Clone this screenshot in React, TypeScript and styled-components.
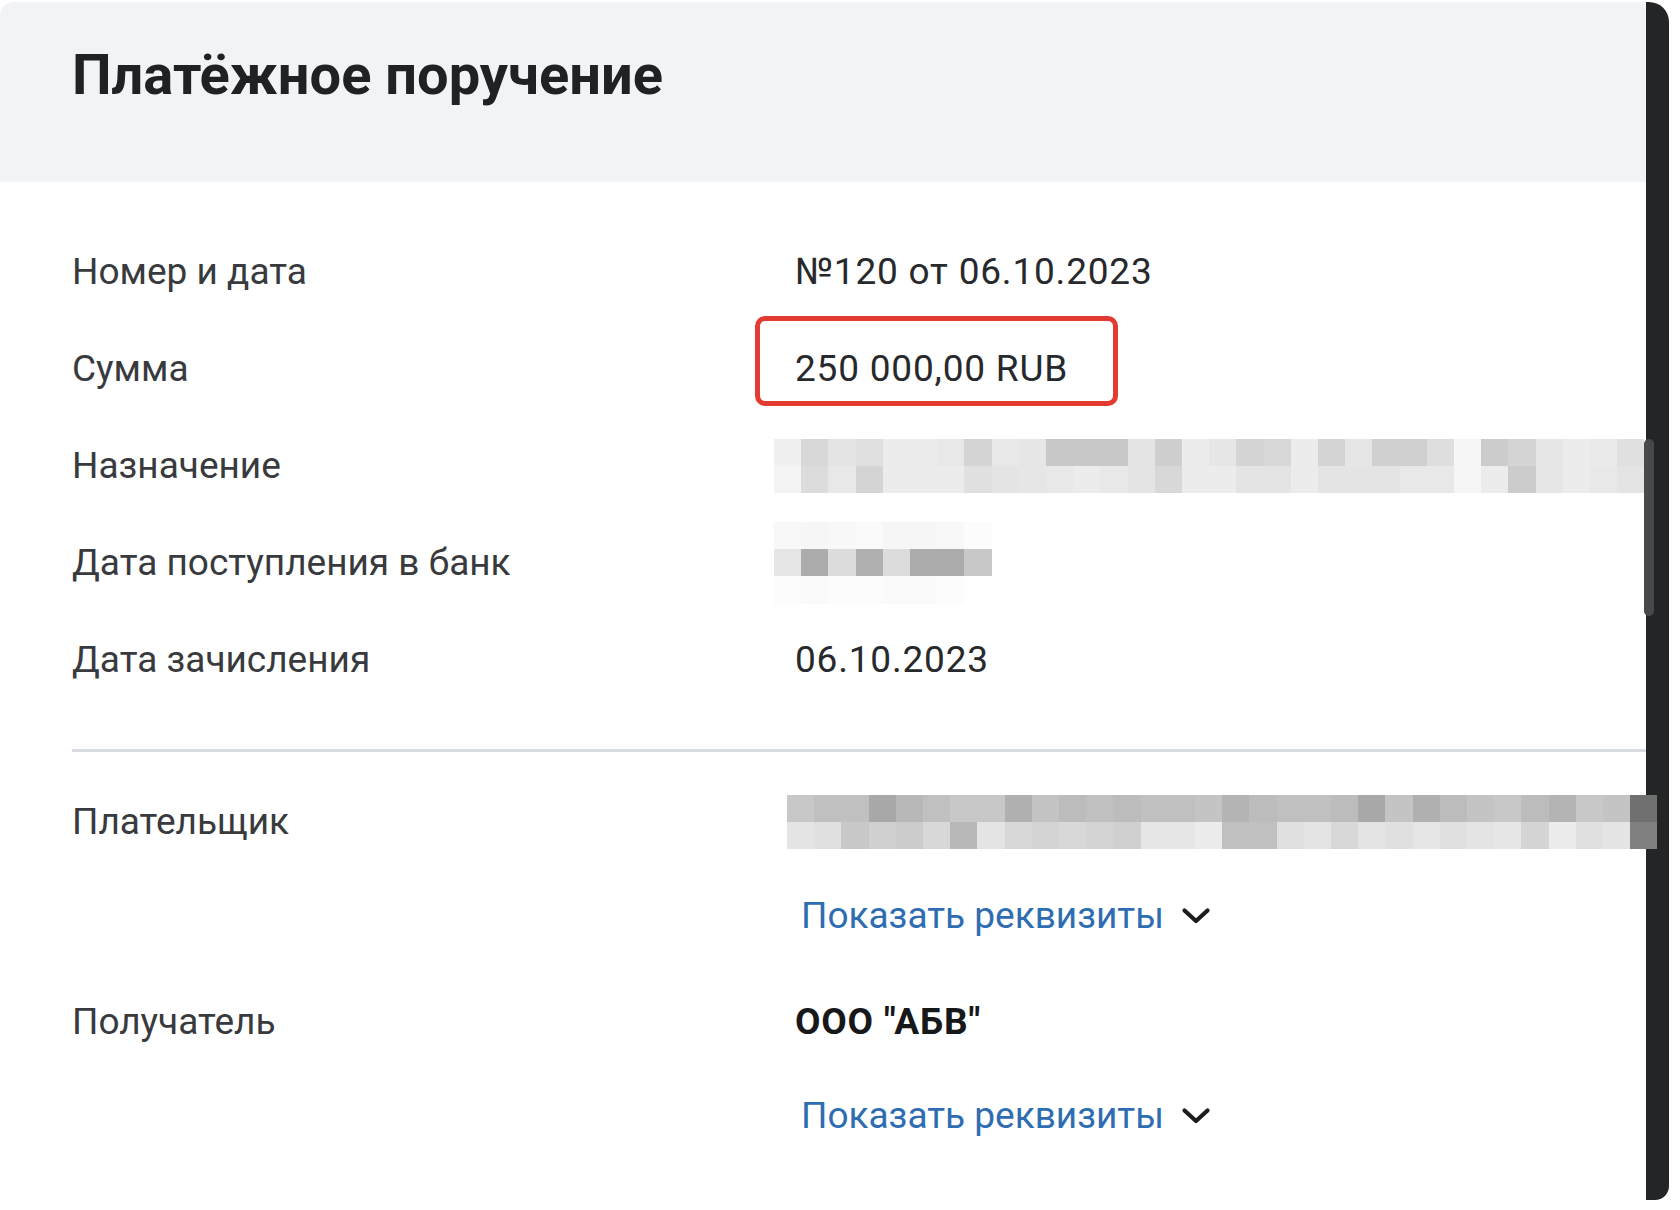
import React from "react";
import styled, { createGlobalStyle } from "styled-components";

const GlobalStyle = createGlobalStyle`
  html, body { margin: 0; padding: 0; background: #ffffff; }
  body { font-family: Roboto, "Noto Sans", sans-serif; -webkit-font-smoothing: antialiased; }
  *, *::before, *::after { box-sizing: border-box; }
`;

const Screen = styled.div`
  width: 1680px;
  height: 1210px;
  display: flex;
  padding: 2px 11px 10px 0;
  overflow: hidden;
  background: #ffffff;
`;

const Panel = styled.section`
  flex: 1;
  min-width: 0;
  display: flex;
  flex-direction: column;
  background: #ffffff;
  border-top-left-radius: 14px;
`;

const Header = styled.header`
  height: 180px;
  padding: 40px 0 0 72px;
  background: #f2f3f6;
  border-top-left-radius: 14px;
`;

const Title = styled.h1`
  margin: 0;
  font: 700 56px/66px Roboto, "Noto Sans", sans-serif;
  color: #202124;
`;

const Body = styled.div`
  display: flex;
  flex-direction: column;
  padding: 68px 0 0 72px;
`;

const Facts = styled.div`
  display: flex;
  flex-direction: column;
  gap: 53px;
`;

const Row = styled.div`
  display: grid;
  grid-template-columns: 723px 1fr;
  align-items: center;
  height: 44px;
`;

const Label = styled.div`
  font: 400 37px/44px Roboto, "Noto Sans", sans-serif;
  color: #383a3d;
  white-space: nowrap;
`;

const Value = styled.div<{ $bold?: boolean }>`
  display: flex;
  align-items: center;
  height: 44px;
  font: ${(p) => (p.$bold ? 700 : 400)} 37px/44px Roboto, "Noto Sans", sans-serif;
  letter-spacing: 0.8px;
  color: ${(p) => (p.$bold ? "#17181a" : "#27292c")};
  white-space: nowrap;
`;

const Highlight = styled.span`
  position: relative;
  &::after {
    content: "";
    position: absolute;
    left: -40px;
    top: -31px;
    width: 363px;
    height: 90px;
    border: 5px solid #e33b31;
    border-radius: 10px;
  }
`;

const Divider = styled.hr`
  margin: 67px 0 0;
  border: 0;
  height: 3px;
  background: #d8dbe1;
`;

const Parties = styled.div`
  display: flex;
  flex-direction: column;
  gap: 62px;
  padding-top: 48px;
`;

const Party = styled.div`
  display: grid;
  grid-template-columns: 723px 1fr;
  align-items: start;
`;

const ValueStack = styled.div`
  display: flex;
  flex-direction: column;
  align-items: flex-start;
  gap: 50px;
`;

const DetailsLink = styled.button`
  display: inline-flex;
  align-items: center;
  gap: 17px;
  margin-left: 6px;
  padding: 0;
  border: 0;
  background: none;
  cursor: pointer;
  font: 400 37px/44px Roboto, "Noto Sans", sans-serif;
  color: #2f6db3;
  svg { flex: none; }
`;

const MosaicSvg = styled.svg<{ $shift: number }>`
  display: block;
  flex: none;
  margin-left: ${(p) => p.$shift}px;
  position: relative;
  z-index: 1;
  shape-rendering: crispEdges;
`;

const Bezel = styled.div`
  position: relative;
  flex: none;
  width: 23px;
  background: #242526;
  border-radius: 0 20px 14px 0;
`;

const Thumb = styled.div`
  position: absolute;
  left: -2px;
  top: 437px;
  width: 10px;
  height: 177px;
  border-radius: 5px;
  background: #48494b;
`;

const g = (s: string) => s.split(",").map((v) => `#${v}${v}${v}`);

const purposeCells = [
  g("f0,d8,e4,e0,ec,ec,e8,d4,e8,e6,c8,c8,c8,e4,cf,ec,e6,d4,d8,ec,d4,e6,d0,d0,de,f6,cc,d4,e6,ec,ea,e0"),
  g("f4,dc,e8,d4,ec,ec,ec,e0,e4,e6,e8,ec,e8,e4,d8,ec,ec,e4,e4,ec,e4,e4,e4,e8,e8,f6,ec,cc,e6,ec,e8,e4"),
];

const receivedCells = [
  g("f8,f6,f8,fa,f6,f6,f8,fc"),
  g("e6,ac,dc,b0,dc,ac,ac,c8"),
  g("fc,fa,fc,fc,fa,fa,fc,fe"),
];

const payerCells = [
  g("c8,c0,c0,a8,b8,c0,c8,c8,b0,c4,bc,c0,bc,c0,c0,c4,b4,bc,c0,c0,bc,a8,c4,b0,bc,c4,c8,bc,b4,c8,c4,70"),
  g("e4,e0,c8,d0,cc,d8,b8,e4,d8,d4,d8,d4,d0,e6,e6,ec,c0,c0,e0,e4,d8,e4,e0,e6,e0,e4,e6,d4,ec,e0,e4,80"),
];

const CELL = 27.2;

function Mosaic({ cells, shift }: { cells: string[][]; shift: number }) {
  const cols = cells[0].length;
  const w = cols * CELL;
  const h = cells.length * CELL;
  return (
    <MosaicSvg $shift={shift} width={w} height={h} viewBox={`0 0 ${w} ${h}`} aria-label="скрыто">
      {cells.map((row, r) =>
        row.map((c, i) => (
          <rect key={`${r}-${i}`} x={i * CELL} y={r * CELL} width={CELL + 0.5} height={CELL + 0.5} fill={c} />
        ))
      )}
    </MosaicSvg>
  );
}

function Chevron() {
  return (
    <svg width="30" height="18" viewBox="0 0 30 18" aria-hidden="true">
      <path d="M3.5 3.5 L15 14 L26.5 3.5" fill="none" stroke="#1c1d1f" strokeWidth="4.2" strokeLinecap="round" strokeLinejoin="round" />
    </svg>
  );
}

export default function App() {
  return (
    <>
      <GlobalStyle />
      <Screen>
        <Panel>
          <Header>
            <Title>Платёжное поручение</Title>
          </Header>
          <Body>
            <Facts>
              <Row>
                <Label>Номер и дата</Label>
                <Value>№120 от 06.10.2023</Value>
              </Row>
              <Row>
                <Label>Сумма</Label>
                <Value>
                  <Highlight>250 000,00 RUB</Highlight>
                </Value>
              </Row>
              <Row>
                <Label>Назначение</Label>
                <Value>
                  <Mosaic cells={purposeCells} shift={-21} />
                </Value>
              </Row>
              <Row>
                <Label>Дата поступления в банк</Label>
                <Value>
                  <Mosaic cells={receivedCells} shift={-21} />
                </Value>
              </Row>
              <Row>
                <Label>Дата зачисления</Label>
                <Value>06.10.2023</Value>
              </Row>
            </Facts>
            <Divider />
            <Parties>
              <Party>
                <Label>Плательщик</Label>
                <ValueStack>
                  <Value>
                    <Mosaic cells={payerCells} shift={-8} />
                  </Value>
                  <DetailsLink type="button">
                    Показать реквизиты
                    <Chevron />
                  </DetailsLink>
                </ValueStack>
              </Party>
              <Party>
                <Label>Получатель</Label>
                <ValueStack>
                  <Value $bold>ООО "АБВ"</Value>
                  <DetailsLink type="button">
                    Показать реквизиты
                    <Chevron />
                  </DetailsLink>
                </ValueStack>
              </Party>
            </Parties>
          </Body>
        </Panel>
        <Bezel>
          <Thumb />
        </Bezel>
      </Screen>
    </>
  );
}
